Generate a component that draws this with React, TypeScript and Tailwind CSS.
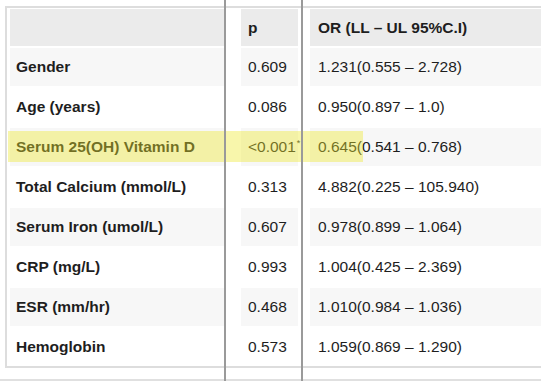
import React from "react";

type Row = { label: string; p: string; or: string; star?: boolean; hl?: boolean };

const rows: Row[] = [
  { label: "Gender", p: "0.609", or: "1.231(0.555 – 2.728)" },
  { label: "Age (years)", p: "0.086", or: "0.950(0.897 – 1.0)" },
  { label: "Serum 25(OH) Vitamin D", p: "<0.001", or: "0.645(0.541 – 0.768)", star: true, hl: true },
  { label: "Total Calcium (mmol/L)", p: "0.313", or: "4.882(0.225 – 105.940)" },
  { label: "Serum Iron (umol/L)", p: "0.607", or: "0.978(0.899 – 1.064)" },
  { label: "CRP (mg/L)", p: "0.993", or: "1.004(0.425 – 2.369)" },
  { label: "ESR (mm/hr)", p: "0.468", or: "1.010(0.984 – 1.036)" },
  { label: "Hemoglobin", p: "0.573", or: "1.059(0.869 – 1.290)" },
];

const App: React.FC = () => {
  return (
    <div className="relative w-[541px] h-[381px] overflow-hidden bg-white font-['Liberation_Sans',Arial,sans-serif] text-[15.5px] text-[#1e1e1e]">
      <div className="ml-[5px] mt-[6px] w-[600px] border-2 border-[#dddddd] pl-[3px] pt-[1px] flex flex-col gap-[2px]">
        {/* header */}
        <div className="flex h-[37px] font-bold">
          <div className="w-[214px] bg-[#ebebeb]" />
          <div className="ml-[17px] w-[57px] bg-[#ebebeb] pl-[7px] flex items-center">p</div>
          <div className="ml-[12px] flex-1 bg-[#ebebeb] pl-[8px] flex items-center">OR (LL – UL 95%C.I)</div>
        </div>

        {rows.map((r, i) => {
          const bg = i % 2 === 0 ? "bg-[#f7f7f7]" : "bg-white";
          return (
            <div key={r.label} className="relative flex h-[38px]">
              <div className={`w-[214px] ${bg} pl-[6px] flex items-center font-bold`}>{r.label}</div>
              <div className={`ml-[17px] w-[57px] ${bg} pl-[7px] flex items-center`}>
                {r.p}
                {r.star && <span className="self-start mt-[9px] ml-[1px] text-[9px]">*</span>}
              </div>
              <div className={`ml-[12px] flex-1 ${bg} pl-[8px] flex items-center`}>{r.or}</div>
              {r.hl && (
                <div className="absolute left-[-2px] top-[3px] w-[355px] h-[31px] bg-[rgba(238,232,45,0.4)]" />
              )}
            </div>
          );
        })}
      </div>

      <div className="mt-[11px] h-[2px] bg-[#e0e0e0]" />

      {/* column rules from the page behind */}
      <div className="absolute left-[224px] top-0 w-[2px] h-full bg-[#9a9a9a]" />
      <div className="absolute left-[301px] top-0 w-[2px] h-full bg-[#9a9a9a]" />
    </div>
  );
};

export default App;
